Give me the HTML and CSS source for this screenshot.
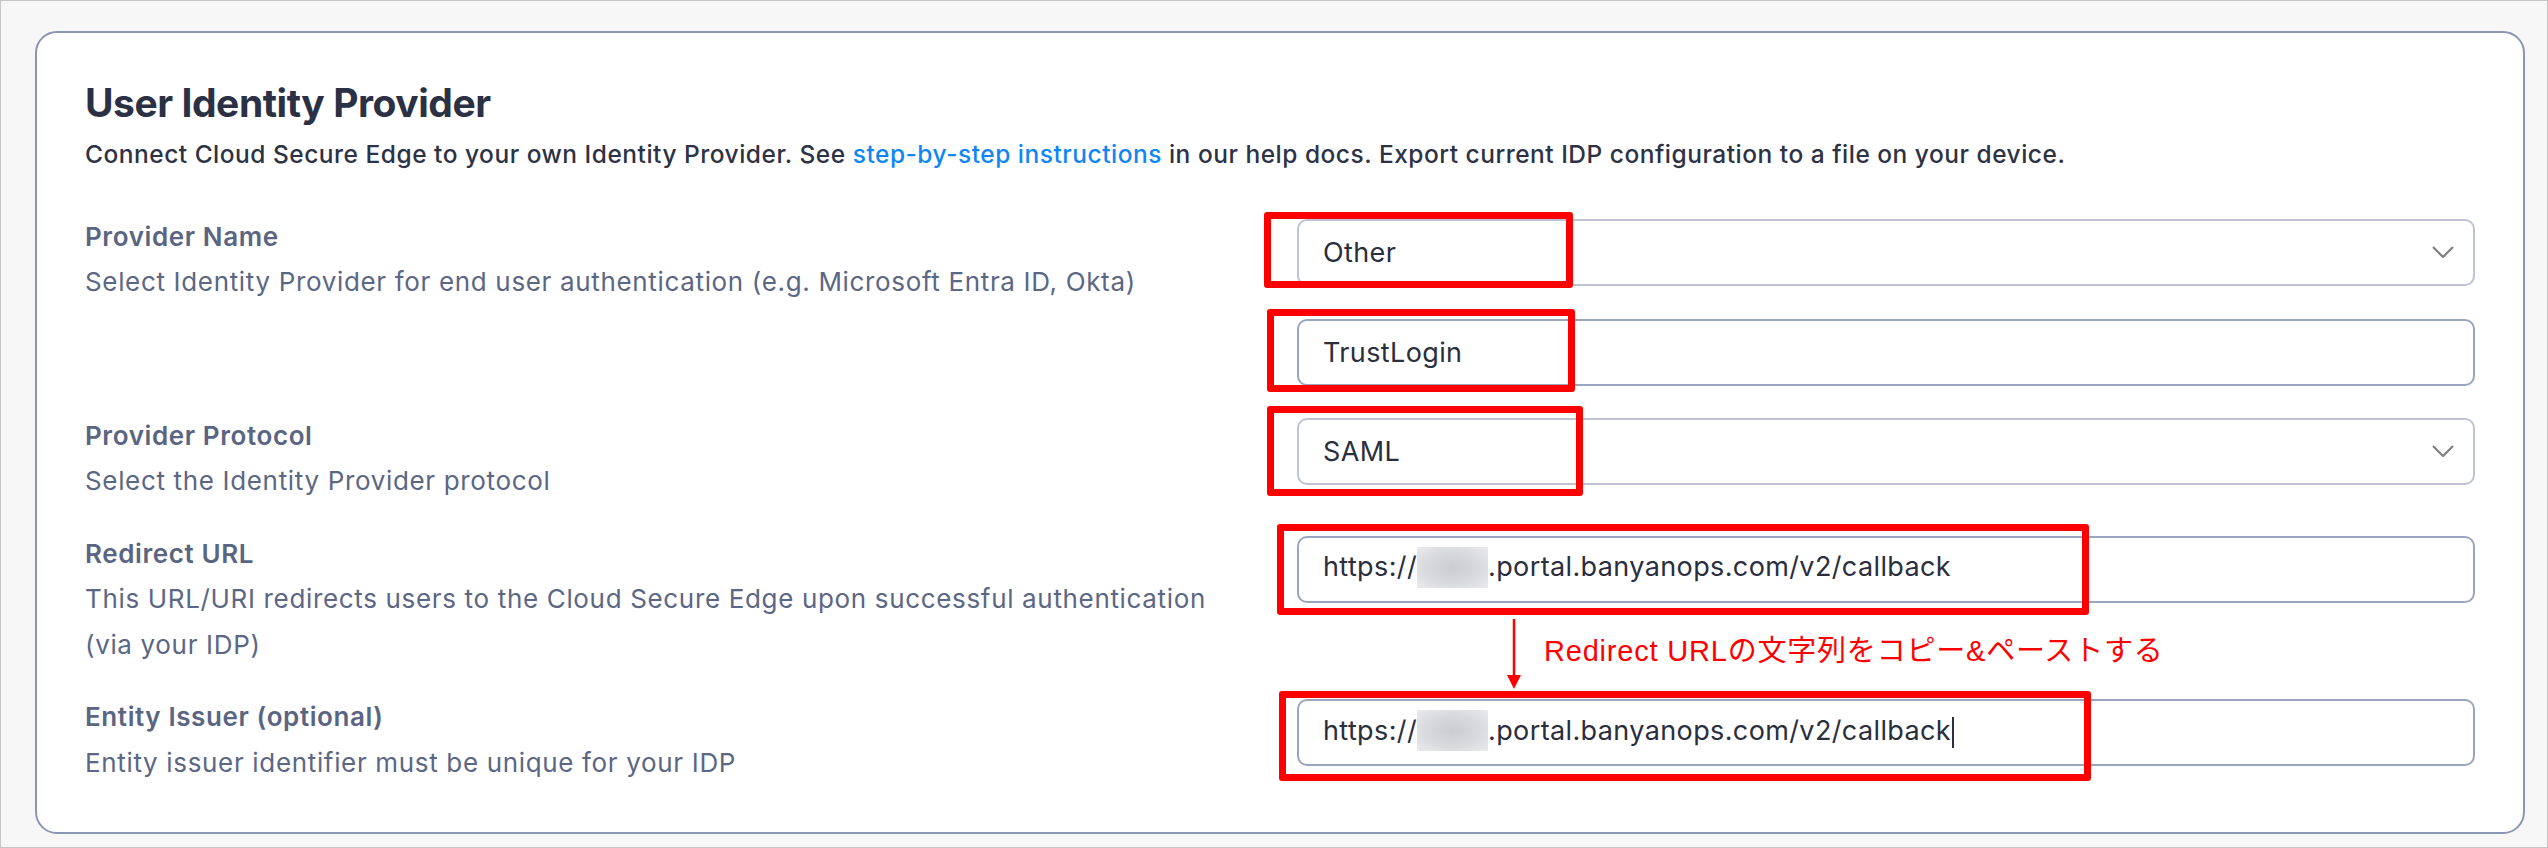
FILE: index.html
```html
<!DOCTYPE html>
<html lang="en">
<head>
  <meta charset="UTF-8" />
  <title>User Identity Provider</title>
  <link rel="stylesheet" href="styles.css">
</head>
<body>

  <section class="card">
    <h2 class="card-title">User Identity Provider</h2>
    <p class="card-desc">Connect Cloud Secure Edge to your own Identity Provider. See <a href="#">step-by-step instructions</a> in our help docs. Export current IDP configuration to a file on your device.</p>

    <div class="form-row">
      <div class="row-info">
        <div class="row-label">Provider Name</div>
        <div class="row-help">Select Identity Provider for end user authentication (e.g. Microsoft Entra ID, Okta)</div>
      </div>
      <div class="row-fields">
        <div class="field field-select">
          <span>Other</span>
          <svg class="chevron" width="22" height="12" viewBox="0 0 22 12"><polyline points="1,1 11,11 21,1" /></svg>
          <span class="mark mark-name"></span>
        </div>
        <div class="field">
          <span>TrustLogin</span>
          <span class="mark mark-custom"></span>
        </div>
      </div>
    </div>

    <div class="form-row">
      <div class="row-info">
        <div class="row-label">Provider Protocol</div>
        <div class="row-help">Select the Identity Provider protocol</div>
      </div>
      <div class="row-fields">
        <div class="field field-select">
          <span>SAML</span>
          <svg class="chevron" width="22" height="12" viewBox="0 0 22 12"><polyline points="1,1 11,11 21,1" /></svg>
          <span class="mark mark-protocol"></span>
        </div>
      </div>
    </div>

    <div class="form-row">
      <div class="row-info">
        <div class="row-label">Redirect URL</div>
        <div class="row-help">This URL/URI redirects users to the Cloud Secure Edge upon successful authentication (via your IDP)</div>
      </div>
      <div class="row-fields">
        <div class="field">
          <span>https://<span class="blurred"></span>.portal.banyanops.com/v2/callback</span>
          <span class="mark mark-redirect"></span>
          <svg class="copy-arrow" width="16" height="70" viewBox="0 0 16 70">
            <line x1="8" y1="0" x2="8" y2="58" />
            <polygon points="1,56 15,56 8,70" />
          </svg>
          <div class="copy-note">Redirect URLの文字列をコピー&amp;ペーストする</div>
        </div>
      </div>
    </div>

    <div class="form-row">
      <div class="row-info">
        <div class="row-label">Entity Issuer (optional)</div>
        <div class="row-help">Entity issuer identifier must be unique for your IDP</div>
      </div>
      <div class="row-fields">
        <div class="field">
          <span>https://<span class="blurred"></span>.portal.banyanops.com/v2/callback<span class="caret"></span></span>
          <span class="mark mark-issuer"></span>
        </div>
      </div>
    </div>
  </section>

</body>
</html>
```

FILE: styles.css
```css
html,
body {
  margin: 0;
}

body {
  box-sizing: border-box;
  height: 848px;
  padding: 30px 22px 13px 34px;
  border: 1px solid #c6c6c6;
  background-color: #f7f7f7;
  font-family: Inter, "Noto Sans", sans-serif;
}

.card {
  background-color: #fff;
  border: 2px solid #8b96b2;
  border-radius: 22px;
  padding: 46px 48px 47px 48px;
}

.card-title {
  margin: 0;
  font-size: 39px;
  line-height: 47px;
  font-weight: 700;
  letter-spacing: -0.45px;
  color: #2b3044;
}

.card-desc {
  margin: 6px 0 36px 0;
  font-size: 24.5px;
  line-height: 45.5px;
  font-weight: 500;
  letter-spacing: 0.5px;
  color: #2d3245;
}

.card-desc a {
  color: #0f86f6;
  text-decoration: none;
}

.form-row {
  display: grid;
  grid-template-columns: 1fr 1fr;
  column-gap: 34px;
  margin-bottom: 27px;
}

.form-row:last-child {
  margin-bottom: 0;
}

.row-info {
  padding-right: 24px;
}

.row-label {
  font-size: 26px;
  line-height: 45.5px;
  font-weight: 600;
  letter-spacing: 0.6px;
  color: #596582;
}

.row-help {
  font-size: 26px;
  line-height: 45.5px;
  letter-spacing: 0.66px;
  color: #5b6784;
}

.row-fields {
  display: flex;
  flex-direction: column;
  gap: 33px;
  padding-top: 5px;
}

.field {
  position: relative;
  box-sizing: border-box;
  height: 67px;
  display: flex;
  align-items: center;
  justify-content: space-between;
  padding: 0 19px 0 24px;
  border: 2px solid #9aa5bf;
  border-radius: 10px;
  font-size: 27px;
  letter-spacing: 0.38px;
  color: #2a2e3d;
  white-space: nowrap;
}

.field-select {
  border-color: #bfc3d3;
}

.chevron polyline {
  fill: none;
  stroke: #808080;
  stroke-width: 2.2;
}

.blurred {
  display: inline-block;
  width: 71px;
  height: 41px;
  vertical-align: middle;
  margin-top: -4px;
  background: radial-gradient(ellipse at center, #cbccd1 0%, #d9dade 55%, #ebebee 100%);
}

.caret {
  display: inline-block;
  width: 2px;
  height: 31px;
  margin-left: 1px;
  vertical-align: middle;
  background-color: #2a2e3d;
}

/* red annotation boxes drawn over the fields */
.mark {
  position: absolute;
  box-sizing: border-box;
  border: 7px solid #ff0000;
  border-radius: 3px;
  pointer-events: none;
}

.mark-name { left: -35px; top: -9px; width: 309px; height: 76px; }
.mark-custom { left: -32px; top: -12px; width: 308px; height: 83px; }
.mark-protocol { left: -32px; top: -14px; width: 316px; height: 90px; }
.mark-redirect { left: -22px; top: -14px; width: 812px; height: 91px; }
.mark-issuer { left: -20px; top: -10px; width: 812px; height: 90px; }

.copy-arrow {
  position: absolute;
  left: 207px;
  top: 81px;
}

.copy-arrow line {
  stroke: #ff0000;
  stroke-width: 2.5;
}

.copy-arrow polygon {
  fill: #ff0000;
}

.copy-note {
  position: absolute;
  left: 245px;
  top: 95px;
  font-family: "Liberation Sans", "Noto Sans CJK JP", sans-serif;
  font-size: 29px;
  line-height: 36px;
  letter-spacing: 0.8px;
  color: #ff0000;
}
```
